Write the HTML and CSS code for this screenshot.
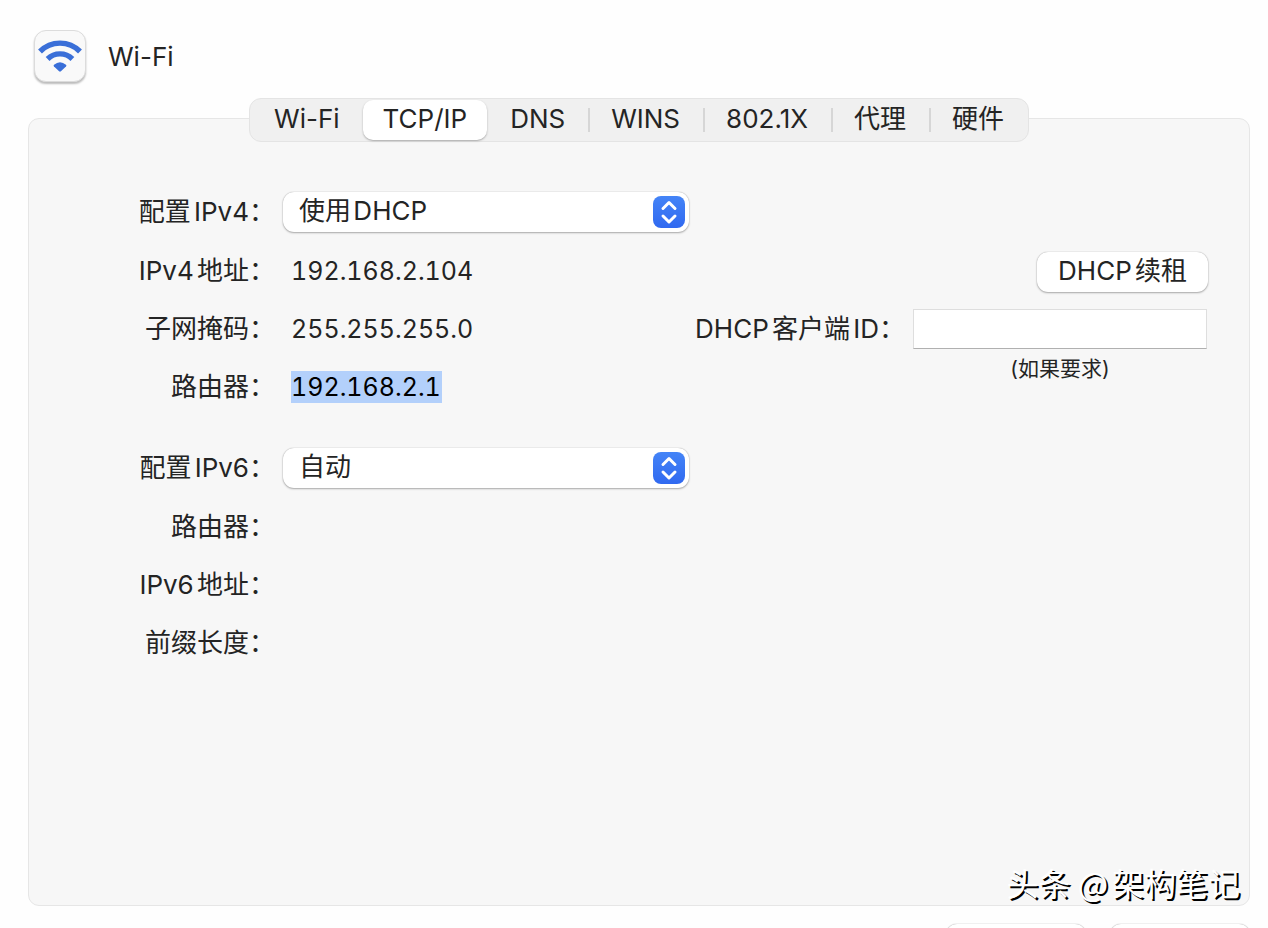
FILE: index.html
```html
<!DOCTYPE html>
<html lang="zh-CN">
<head>
<meta charset="utf-8">
<meta name="viewport" content="width=device-width, initial-scale=1">
<title>Wi-Fi</title>
<link rel="stylesheet" href="styles.css">
</head>
<body>
<main class="window">
  <header class="header">
    <span class="service-icon">
      <svg viewBox="0 0 50 50" aria-hidden="true">
        <g fill="none" stroke="#3a6fd8" stroke-width="5.400">
          <path d="M5 20.500a28 28 0 0 1 40 0"/>
          <path d="M12.600 28a17.500 17.500 0 0 1 24.800 0"/>
        </g>
        <path d="M19 33.700q6-5 12 0 .9.800 0 1.700l-5.100 4.900q-.9.800-1.800 0l-5.100-4.900q-.9-.9 0-1.700z" fill="#3a6fd8"/>
      </svg>
    </span>
    <h1 class="title">Wi-Fi</h1>
  </header>

  <div class="tabs" role="tablist">
    <button class="tab" type="button" role="tab">Wi-Fi</button>
    <button class="tab tab-selected" type="button" role="tab" aria-selected="true">TCP/IP</button>
    <button class="tab" type="button" role="tab">DNS</button>
    <button class="tab tab-divided" type="button" role="tab">WINS</button>
    <button class="tab tab-divided" type="button" role="tab">802.1X</button>
    <button class="tab tab-divided" type="button" role="tab">代理</button>
    <button class="tab tab-divided" type="button" role="tab">硬件</button>
  </div>

  <section class="panel" role="tabpanel">
    <div class="settings">
      <div class="group">
        <div class="row row-control">
          <label class="label" for="ipv4">配置IPv4：</label>
          <span class="popup">
            <select class="popup-select" id="ipv4"><option>使用&#8202;DHCP</option></select>
            <svg class="popup-arrows" viewBox="0 0 32 32" aria-hidden="true"><path d="M10 12.500l6-6 6 6M10 20l6 6 6-6"/></svg>
          </span>
        </div>
        <div class="row"><span class="label">IPv4地址：</span><span class="value">192.168.2.104</span></div>
        <div class="row"><span class="label">子网掩码：</span><span class="value">255.255.255.0</span></div>
        <div class="row"><span class="label">路由器：</span><span class="value"><mark class="selection">192.168.2.1</mark></span></div>
      </div>
      <div class="group">
        <div class="row row-control">
          <label class="label" for="ipv6">配置IPv6：</label>
          <span class="popup">
            <select class="popup-select" id="ipv6"><option>自动</option></select>
            <svg class="popup-arrows" viewBox="0 0 32 32" aria-hidden="true"><path d="M10 12.500l6-6 6 6M10 20l6 6 6-6"/></svg>
          </span>
        </div>
        <div class="row"><span class="label">路由器：</span></div>
        <div class="row"><span class="label">IPv6地址：</span></div>
        <div class="row"><span class="label">前缀长度：</span></div>
      </div>
    </div>

    <div class="lease">
      <div class="lease-action"><button class="button" type="button">DHCP续租</button></div>
      <div class="client">
        <label class="client-label" for="client-id">DHCP客户端ID：</label>
        <input class="client-input" id="client-id" type="text">
        <span class="note">(如果要求)</span>
      </div>
    </div>
    <span class="watermark">头条 @架构笔记</span>
  </section>

  <footer class="footer">
    <button class="button footer-button" type="button" aria-label="取消"></button>
    <button class="button footer-button" type="button" aria-label="好"></button>
  </footer>
</main>
</body>
</html>
```
FILE: styles.css
```css
* {
  box-sizing: border-box;
}

body {
  margin: 0;
  height: 100vh;
  overflow: hidden;
  background: #fefefe;
  color: #242424;
  font: 26px/32px Inter, "Noto Sans CJK SC", sans-serif;
  text-autospace: normal;
}

button,
input,
select {
  font: inherit;
  color: inherit;
  text-autospace: inherit;
}

.window {
  display: flex;
  flex-direction: column;
  height: calc(100vh + 54px);
  padding: 30px 18px 0 28px;
}

.header {
  display: flex;
  align-items: center;
  gap: 22px;
  height: 68px;
  padding: 0 6px 16px;
}

.service-icon {
  width: 52px;
  height: 52px;
  border: 1px solid #dcdcdc;
  border-radius: 12px;
  background: #f9f9f9;
  box-shadow: 0 2px 2px #bcbcbc;
}

.service-icon svg {
  display: block;
}

.title {
  margin: 0;
  padding-top: 2px;
  font-size: 26px;
  font-weight: 400;
}

.tabs {
  z-index: 1;
  display: flex;
  align-self: center;
  height: 44px;
  padding: 1px;
  border: 1px solid #e4e4e4;
  border-radius: 12px;
  background: #f0f0f0;
}

.tab {
  display: flex;
  align-items: center;
  padding: 0 23px 2px;
  border: 0;
  border-radius: 10px;
  background: none;
  white-space: nowrap;
}

.tab-selected {
  padding: 0 20px 2px;
  background: #fff;
  box-shadow: 0 1px 2px #a8a8a8;
}

.tab-divided {
  border-radius: 0;
  background: linear-gradient(#d6d6d6, #d6d6d6) left center / 2px 24px no-repeat;
}

.panel {
  position: relative;
  display: flex;
  flex: 1;
  justify-content: space-between;
  margin-top: -24px;
  padding: 63px 41px 0 0;
  border: 1px solid #e6e6e6;
  border-radius: 11px;
  background: #f7f7f7;
}

.settings {
  display: flex;
  flex-direction: column;
  gap: 22px;
}

.row {
  display: grid;
  grid-template-columns: 246px 406px;
  align-items: center;
  gap: 8px;
  height: 58px;
}

.row-control {
  height: 60px;
}

.label {
  text-align: right;
  white-space: nowrap;
}

.value {
  padding-left: 8px;
  font-size: 25px;
  font-variant-numeric: tabular-nums;
}

.selection {
  padding: 1px 1px 1px 0;
  background: #b3d0fb;
  color: #000;
}

.popup {
  position: relative;
  display: block;
}

.popup-select {
  display: block;
  width: 100%;
  height: 40px;
  padding: 0 44px 2px 16px;
  border: 0;
  border-radius: 11px;
  appearance: none;
  background: #fff;
  box-shadow: 0 0 1px #999, 0 1px 2px #aaa;
}

.popup-arrows {
  position: absolute;
  top: 4px;
  right: 4px;
  width: 32px;
  height: 32px;
  border-radius: 8px;
  background: linear-gradient(#4484f7, #3069f0);
  fill: none;
  stroke: #fff;
  stroke-width: 3;
  stroke-linecap: round;
  stroke-linejoin: round;
  pointer-events: none;
}

.lease {
  padding-top: 60px;
}

.lease-action {
  display: flex;
  align-items: center;
  justify-content: flex-end;
  height: 60px;
}

.button {
  height: 40px;
  padding: 0 21px 2px;
  border: 0;
  border-radius: 11px;
  background: #fff;
  box-shadow: 0 0 1px #999, 0 1px 2px #aaa;
  white-space: nowrap;
}

.client {
  display: grid;
  grid-template-columns: auto 294px;
  align-items: center;
  gap: 8px;
  padding: 7px 1px 0 0;
}

.client-label {
  white-space: nowrap;
}

.client-input {
  width: 100%;
  height: 40px;
  padding: 0 8px;
  border: 1px solid #dedede;
  border-bottom-color: #b0b0b0;
  background: #fff;
}

.note {
  grid-column: 2;
  font-size: 21px;
  line-height: 24px;
  text-align: center;
}

.watermark {
  position: absolute;
  right: 9px;
  bottom: 3px;
  color: #fff;
  font-family: "Noto Sans CJK SC", sans-serif;
  font-size: 32px;
  line-height: 40px;
  text-shadow: 2px 2px 0 #000;
}

.footer {
  display: flex;
  justify-content: flex-end;
  gap: 24px;
  padding: 18px 0;
}

.footer-button {
  width: 140px;
}
```
